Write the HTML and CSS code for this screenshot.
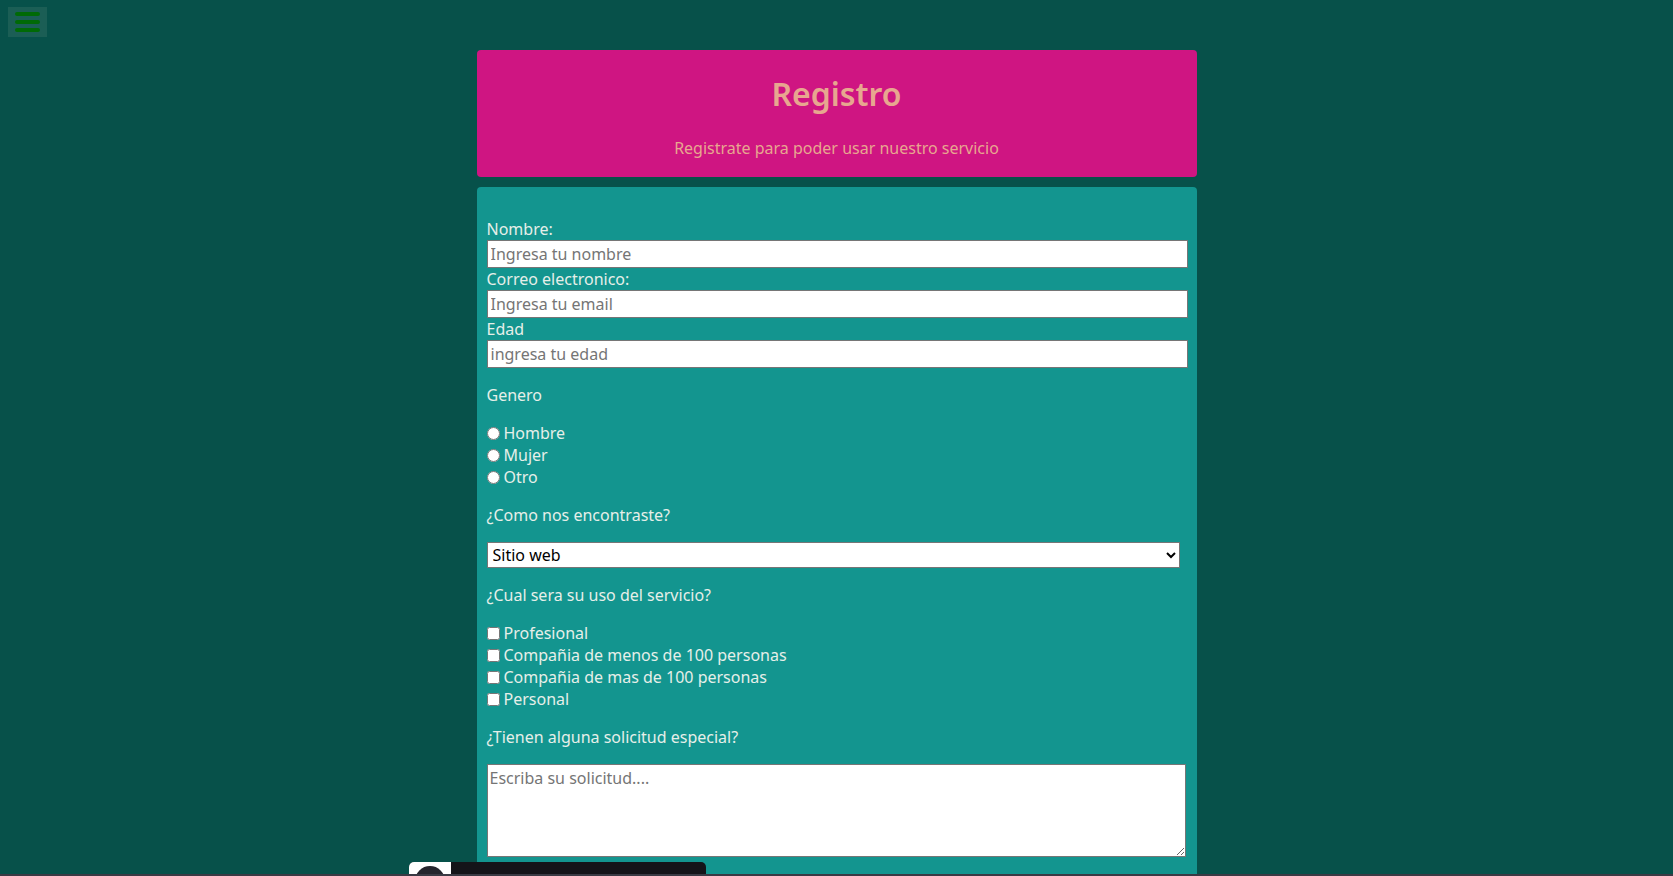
FILE: index.html
```html
<!DOCTYPE html>
<html lang="es">
<head>
<meta charset="utf-8">
<title>Registro</title>
<link rel="stylesheet" href="styles.css">
</head>
<body>
<button class="menu-toggle" type="button" aria-label="Menu">
  <span class="bar"></span><span class="bar"></span><span class="bar"></span>
</button>
<main class="container">
  <header class="hero">
    <h1 class="hero-title">Registro</h1>
    <p class="hero-sub">Registrate para poder usar nuestro servicio</p>
  </header>
  <form class="form-card">
    <label class="field-label" for="nombre">Nombre:</label>
    <input class="text-input" id="nombre" type="text" placeholder="Ingresa tu nombre">
    <label class="field-label" for="email">Correo electronico:</label>
    <input class="text-input" id="email" type="email" placeholder="Ingresa tu email">
    <label class="field-label" for="edad">Edad</label>
    <input class="text-input" id="edad" type="number" placeholder="ingresa tu edad">

    <p class="question">Genero</p>
    <label class="option"><input class="radio" type="radio" name="genero">Hombre</label>
    <label class="option"><input class="radio" type="radio" name="genero">Mujer</label>
    <label class="option"><input class="radio" type="radio" name="genero">Otro</label>

    <p class="question">¿Como nos encontraste?</p>
    <select class="select-input">
      <option>Sitio web</option>
      <option>Redes sociales</option>
      <option>Amigos</option>
    </select>

    <p class="question">¿Cual sera su uso del servicio?</p>
    <label class="option"><input class="check" type="checkbox">Profesional</label>
    <label class="option"><input class="check" type="checkbox">Compañia de menos de 100 personas</label>
    <label class="option"><input class="check" type="checkbox">Compañia de mas de 100 personas</label>
    <label class="option"><input class="check" type="checkbox">Personal</label>

    <p class="question">¿Tienen alguna solicitud especial?</p>
    <textarea class="text-area" placeholder="Escriba su solicitud...."></textarea>
  </form>
</main>
<div class="mini-player">
  <div class="player-thumb"><span class="player-avatar"></span></div>
  <div class="player-body"></div>
</div>
<div class="bottom-strip"></div>
</body>
</html>
```
FILE: styles.css
```css
html, body {
  margin: 0;
  padding: 0;
}
body {
  background: #07514a;
  font-family: "Noto Sans", "DejaVu Sans", sans-serif;
  font-size: 16px;
  color: #e6efe9;
  height: 876px;
  overflow: hidden;
}
.menu-toggle {
  position: absolute;
  left: 8px;
  top: 7px;
  width: 39px;
  height: 30px;
  padding: 0;
  border: 0;
  background: #1b5e55;
  display: flex;
  flex-direction: column;
  justify-content: center;
  align-items: center;
  gap: 4px;
}
.menu-toggle .bar {
  display: block;
  width: 25px;
  height: 4px;
  border-radius: 2px;
  background: #006a06;
}
.container {
  width: 720px;
  margin: 50px auto 0;
}
.hero {
  background: #cf1582;
  border-radius: 4px;
  padding: 1px 0 2px;
  text-align: center;
  color: #e7a78f;
}
.hero-title {
  font-size: 32px;
  font-weight: 600;
  margin: 21px 0;
}
.hero-sub {
  margin: 22px 0 16px;
}
.form-card {
  margin-top: 10px;
  background: #13958f;
  border-radius: 4px;
  padding: 31px 10px 30px;
  display: flex;
  flex-direction: column;
  align-items: flex-start;
}
.field-label {
  display: block;
  line-height: 22px;
}
.text-input {
  box-sizing: border-box;
  width: 701px;
  height: 28px;
  margin: 0;
  padding: 2px 3px;
  border: 1px solid #767676;
  border-radius: 0;
  font-family: inherit;
  font-size: 16px;
  color: #222;
  background: #fff;
}
.text-input::placeholder,
.text-area::placeholder {
  color: #757575;
}
.question {
  margin: 16px 0;
  line-height: 22px;
}
.option {
  display: flex;
  align-items: center;
  line-height: 22px;
}
.radio, .check {
  margin: 0 4px 0 0;
  width: 13px;
  height: 13px;
}
.select-input {
  box-sizing: border-box;
  width: 693px;
  height: 26px;
  margin: 0;
  border: 1px solid #767676;
  border-radius: 0;
  background: #fff;
  font-family: inherit;
  font-size: 16px;
  color: #000;
  padding: 0 1px;
}
.text-area {
  box-sizing: border-box;
  display: block;
  width: 699px;
  height: 93px;
  margin: 0;
  padding: 2px 2px;
  border: 1px solid #767676;
  border-radius: 0;
  font-family: inherit;
  font-size: 16px;
  background: #fff;
  resize: both;
}
.mini-player {
  position: fixed;
  left: 409px;
  top: 862px;
  width: 297px;
  height: 60px;
  display: flex;
  border-radius: 5px 5px 0 0;
  overflow: hidden;
  background: #141419;
}
.player-thumb {
  width: 42px;
  background: #fff;
  display: flex;
  justify-content: center;
  align-items: flex-start;
  padding-top: 4px;
  box-sizing: border-box;
}
.player-avatar {
  display: block;
  width: 30px;
  height: 30px;
  border-radius: 50%;
  background: #25252d;
}
.player-body {
  flex: 1;
}
.bottom-strip {
  position: fixed;
  left: 0;
  right: 0;
  bottom: 0;
  height: 2px;
  background: #3a3a44;
}
```
